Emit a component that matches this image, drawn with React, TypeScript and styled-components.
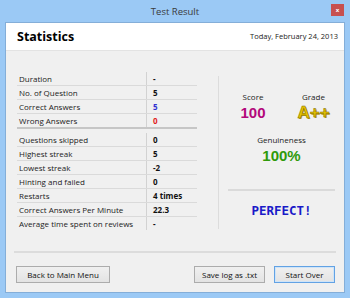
import React from "react";
import styled, { createGlobalStyle } from "styled-components";

const GlobalStyle = createGlobalStyle`
  html, body {
    margin: 0;
    padding: 0;
    background: #ffffff;
  }
  body {
    font-family: "Open Sans", "Noto Sans", sans-serif;
  }
`;

type Row = {
  label: string;
  value: string;
  tone?: "blue" | "red";
  groupEnd?: boolean;
};

const rows: Row[] = [
  { label: "Duration", value: "-" },
  { label: "No. of Question", value: "5" },
  { label: "Correct Answers", value: "5", tone: "blue" },
  { label: "Wrong Answers", value: "0", tone: "red", groupEnd: true },
  { label: "Questions skipped", value: "0" },
  { label: "Highest streak", value: "5" },
  { label: "Lowest streak", value: "-2" },
  { label: "Hinting and failed", value: "0" },
  { label: "Restarts", value: "4 times" },
  { label: "Correct Answers Per Minute", value: "22.3" },
  { label: "Average time spent on reviews", value: "-" },
];

const App: React.FC = () => {
  return (
    <>
      <GlobalStyle />
      <Window>
        <TitleBar>
          <Title>Test Result</Title>
          <CloseButton>x</CloseButton>
        </TitleBar>
        <Client>
          <Header>
            <h1>Statistics</h1>
            <span className="date">Today, February 24, 2013</span>
          </Header>
          <Body>
            <Main>
              <StatsTable>
                {rows.map((r, i) => (
                  <StatRow
                    key={r.label}
                    $groupEnd={r.groupEnd}
                    $last={i === rows.length - 1}
                  >
                    <Label>{r.label}</Label>
                    <Value $tone={r.tone}>{r.value}</Value>
                  </StatRow>
                ))}
              </StatsTable>
              <ResultPanel>
                <ScoreGrid>
                  <Metric>
                    <Caption>Score</Caption>
                    <BigValue $color="#b3087b">100</BigValue>
                  </Metric>
                  <Metric>
                    <Caption>Grade</Caption>
                    <Grade>A++</Grade>
                  </Metric>
                </ScoreGrid>
                <Metric className="genuine">
                  <Caption>Genuineness</Caption>
                  <BigValue $color="#2f9a0a">100%</BigValue>
                </Metric>
                <Divider />
                <Verdict>PERFECT!</Verdict>
              </ResultPanel>
            </Main>
            <Separator />
            <Buttons>
              <Button $width={94}>Back to Main Menu</Button>
              <Spacer />
              <Button $width={71}>Save log as .txt</Button>
              <Button $width={61} $focused>
                Start Over
              </Button>
            </Buttons>
          </Body>
        </Client>
      </Window>
    </>
  );
};

const Window = styled.div`
  width: 350px;
  height: 298px;
  background: #9bc9f5;
  display: flex;
  flex-direction: column;
`;

const TitleBar = styled.div`
  position: relative;
  height: 22px;
  flex-shrink: 0;
  display: flex;
  align-items: center;
  justify-content: center;
`;

const Title = styled.span`
  font-size: 9.5px;
  color: #3a3a3a;
`;

const CloseButton = styled.div`
  position: absolute;
  top: 4px;
  right: 6px;
  width: 13px;
  height: 12px;
  background: #c75050;
  color: #ffffff;
  font-size: 6px;
  font-weight: bold;
  display: flex;
  align-items: center;
  justify-content: center;
`;

const Client = styled.div`
  flex: 1;
  min-height: 0;
  margin: 0 5px 5px 5px;
  border: 1px solid #84aed8;
  background: #f0f0f0;
  display: flex;
  flex-direction: column;
`;

const Header = styled.div`
  height: 27px;
  flex-shrink: 0;
  background: #ffffff;
  border-bottom: 1px solid #e3e3e3;
  display: flex;
  align-items: center;
  justify-content: space-between;
  padding: 0 6px 0 11px;

  h1 {
    margin: 0;
    font-size: 12.5px;
    font-weight: bold;
    color: #000000;
  }

  .date {
    font-size: 7.5px;
    color: #222222;
    margin-top: -2px;
  }
`;

const Body = styled.div`
  flex: 1;
  min-height: 0;
  padding: 0 8px 0 8px;
  display: flex;
  flex-direction: column;
`;

const Main = styled.div`
  height: 200px;
  flex-shrink: 0;
  box-sizing: border-box;
  padding: 21px 0 0 3px;
  display: flex;
  align-items: flex-start;
`;

const StatsTable = styled.div`
  width: 180px;
  flex-shrink: 0;
  display: flex;
  flex-direction: column;
`;

const StatRow = styled.div<{ $groupEnd?: boolean; $last?: boolean }>`
  height: 13px;
  display: grid;
  grid-template-columns: 130px 1fr;
  border-bottom: ${(p) =>
    p.$last
      ? "1px solid transparent"
      : p.$groupEnd
      ? "2px solid #c6c6c6"
      : "1px solid #dadada"};
  margin-bottom: ${(p) => (p.$groupEnd ? "4px" : "0")};
  font-size: 8px;
  line-height: 13px;
`;

const Label = styled.span`
  padding-left: 2px;
  color: #222222;
  border-right: 1px solid #d2d2d2;
`;

const Value = styled.span<{ $tone?: "blue" | "red" }>`
  padding-left: 6px;
  font-weight: bold;
  color: ${(p) =>
    p.$tone === "blue" ? "#3030d0" : p.$tone === "red" ? "#e02020" : "#111111"};
`;

const ResultPanel = styled.div`
  flex: 1;
  margin: 4px 0 0 21px;
  height: 153px;
  box-sizing: border-box;
  border-left: 1px solid #dcdcdc;
  padding: 16px 0 0 9px;
  display: flex;
  flex-direction: column;

  .genuine {
    width: 107px;
    margin-top: 14px;
  }
`;

const ScoreGrid = styled.div`
  width: 107px;
  display: grid;
  grid-template-columns: 50px 1fr;
  column-gap: 14px;
`;

const Metric = styled.div`
  display: flex;
  flex-direction: column;
  align-items: center;
`;

const Caption = styled.span`
  font-size: 8px;
  line-height: 10px;
  color: #222222;
`;

const BigValue = styled.span<{ $color: string }>`
  margin-top: 2px;
  font-family: "Liberation Sans", Arial, sans-serif;
  font-size: 15px;
  line-height: 17px;
  font-weight: bold;
  color: ${(p) => p.$color};
`;

const Grade = styled.span`
  margin-top: 2px;
  font-family: "Liberation Sans", Arial, sans-serif;
  font-size: 17px;
  line-height: 17px;
  font-weight: bold;
  color: #e8c400;
  -webkit-text-stroke: 0.5px #7d6a00;
  text-shadow: 1px 1px 0 #b59a1a;
`;

const Divider = styled.div`
  height: 2px;
  background: #dadada;
  margin-top: 25px;
  width: 107px;
`;

const Verdict = styled.div`
  width: 107px;
  margin-top: 13px;
  text-align: center;
  font-family: "DejaVu Sans Mono", "Liberation Mono", monospace;
  font-size: 12.5px;
  line-height: 14px;
  font-weight: bold;
  color: #1a1ac8;
`;

const Separator = styled.div`
  height: 2px;
  flex-shrink: 0;
  background: #dcdcdc;
`;

const Buttons = styled.div`
  margin-top: 13px;
  padding: 0 1px 0 2px;
  display: flex;
  gap: 9px;
`;

const Spacer = styled.div`
  flex: 1;
`;

const Button = styled.button<{ $focused?: boolean; $width: number }>`
  width: ${(p) => p.$width}px;
  height: 17px;
  box-sizing: border-box;
  padding: 0;
  font-family: "Open Sans", "Noto Sans", sans-serif;
  font-size: 8px;
  color: #111111;
  background: linear-gradient(#f0f0f0, #e3e3e3);
  border: 1px solid ${(p) => (p.$focused ? "#62a2e4" : "#acacac")};
  box-shadow: ${(p) => (p.$focused ? "inset 0 0 0 1px #cfe4f8" : "none")};
`;

export default App;
